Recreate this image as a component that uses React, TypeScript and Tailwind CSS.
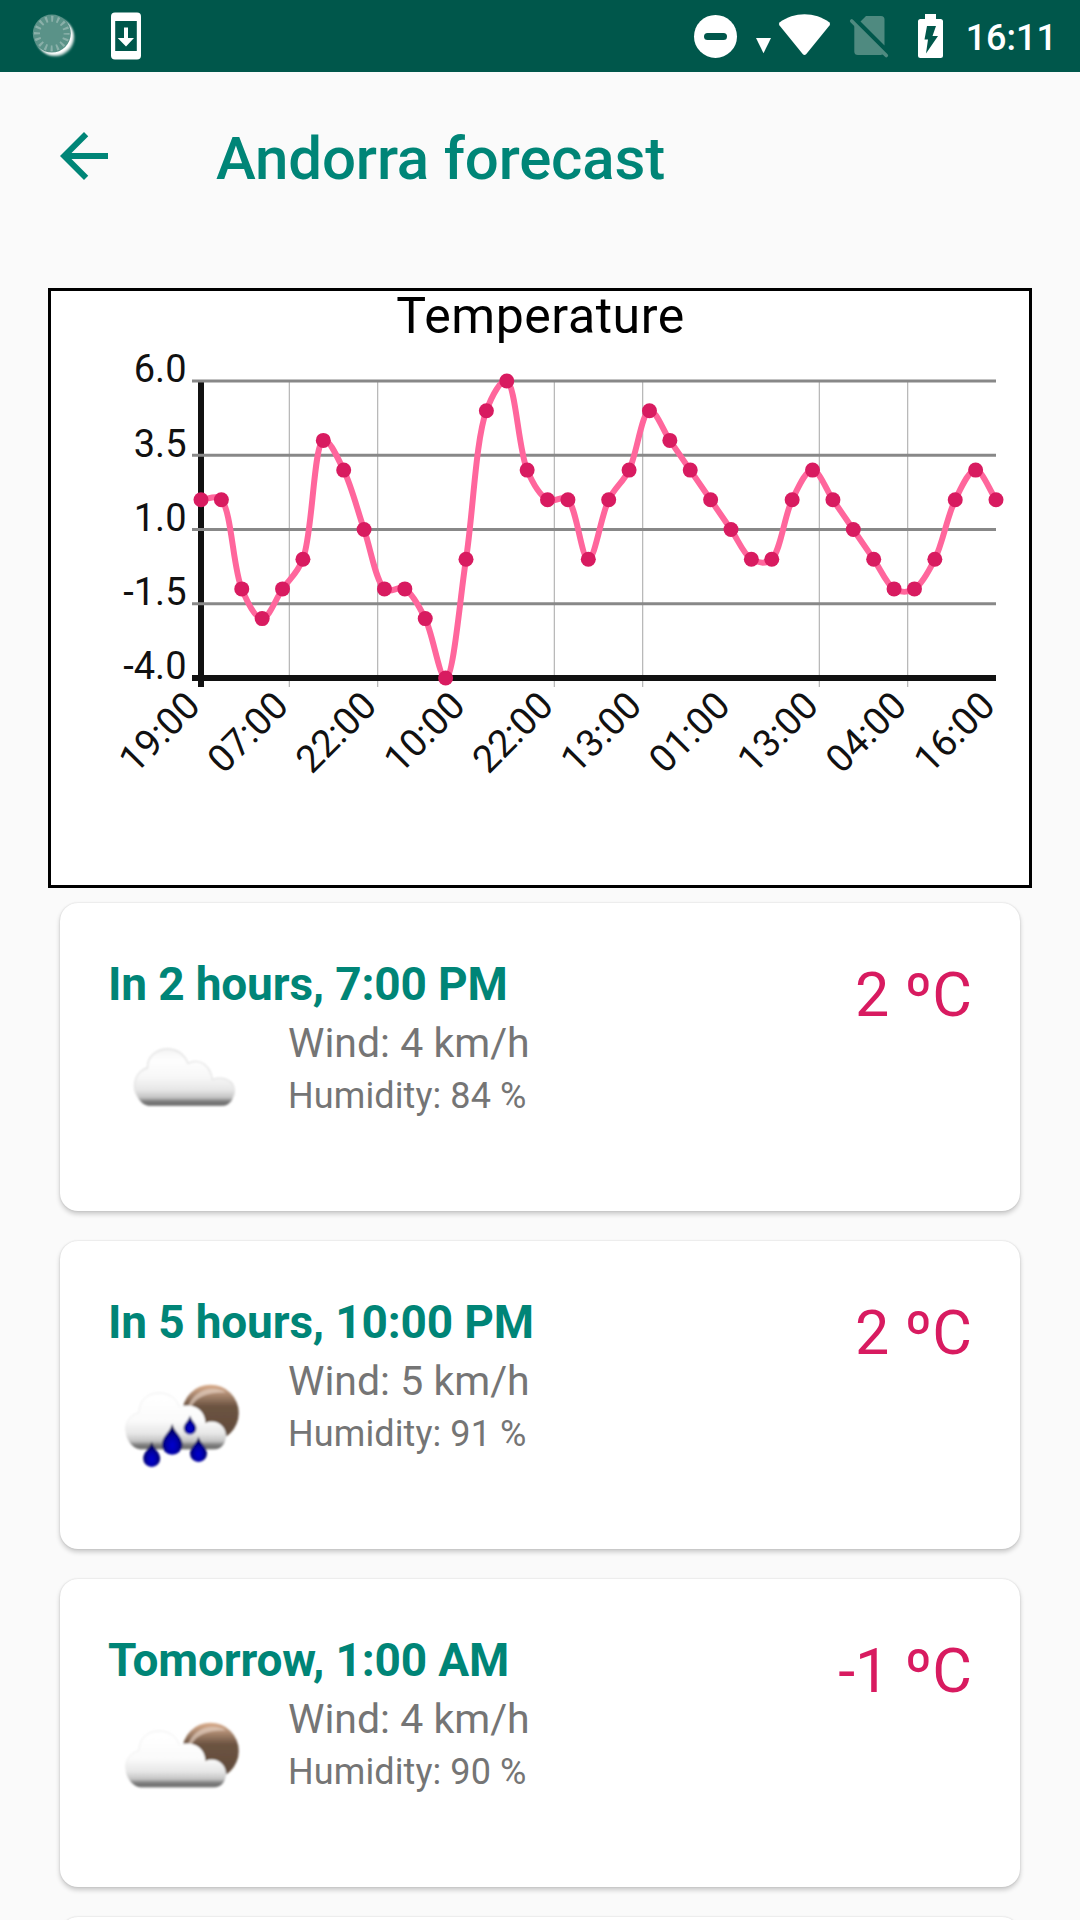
import React from 'react';

const TEMPS = [
  2, 2, -1, -2, -1, 0, 4, 3, 1, -1, -1, -2, -4, 0, 5, 6, 3, 2, 2, 0, 2, 3, 5, 4, 3, 2, 1, 0, 0, 2, 3,
  2, 1, 0, -1, -1, 0, 2, 3, 2,
];
const X_LABELS = ['19:00', '07:00', '22:00', '10:00', '22:00', '13:00', '01:00', '13:00', '04:00', '16:00'];
const X_LINES = [1, 2, 4, 5, 7, 8];
const Y_LABELS = [6, 3.5, 1, -1.5, -4];

// Plot area inside the 978x594 chart canvas.
const LEFT = 150;
const RIGHT = 945;
const TOP = 90;
const BOTTOM = 387;

const px = (i: number) => LEFT + (i * (RIGHT - LEFT)) / (TEMPS.length - 1);
const py = (v: number) => TOP + ((6 - v) * (BOTTOM - TOP)) / 10;

type Pt = [number, number];

// Centripetal Catmull-Rom spline, converted to cubic Bézier segments.
function splinePath(values: number[]): string {
  const n = values.length;
  const pts: Pt[] = values.map((v, i) => [i, v]);
  const all: Pt[] = [
    [-1, 2 * values[0] - values[1]],
    ...pts,
    [n, 2 * values[n - 1] - values[n - 2]],
  ];
  const knot = (a: Pt, b: Pt) => Math.pow((a[0] - b[0]) ** 2 + (a[1] - b[1]) ** 2, 0.25);
  let d = `M${px(0)} ${py(values[0])}`;
  for (let i = 1; i < n; i++) {
    const [p0, p1, p2, p3] = [all[i - 1], all[i], all[i + 1], all[i + 2]];
    const d0 = knot(p0, p1);
    const d1 = knot(p1, p2);
    const d2 = knot(p2, p3);
    const c: Pt[] = [[0, 0], [0, 0]];
    for (const k of [0, 1]) {
      const m1 = d1 * ((p1[k] - p0[k]) / d0 - (p2[k] - p0[k]) / (d0 + d1) + (p2[k] - p1[k]) / d1);
      const m2 = d1 * ((p2[k] - p1[k]) / d1 - (p3[k] - p1[k]) / (d1 + d2) + (p3[k] - p2[k]) / d2);
      c[0][k] = p1[k] + m1 / 3;
      c[1][k] = p2[k] - m2 / 3;
    }
    d += `C${px(c[0][0])} ${py(c[0][1])} ${px(c[1][0])} ${py(c[1][1])} ${px(p2[0])} ${py(p2[1])}`;
  }
  return d;
}

function Chart() {
  return (
    <section className="mx-12 h-[600px] border-[3px] border-black bg-white">
      <svg viewBox="0 0 978 594" className="block h-full w-full overflow-visible" fontFamily="Roboto, sans-serif">
        <text x="489.5" y="42" fontSize="50" letterSpacing="0.55" textAnchor="middle" fill="#000">
          Temperature
        </text>
        {X_LINES.map((i) => (
          <line key={i} x1={LEFT + (i * 795) / 9} x2={LEFT + (i * 795) / 9} y1={TOP} y2="396" stroke="#b4b4b4" strokeWidth="1.2" />
        ))}
        <line x1={LEFT} x2={LEFT} y1={TOP} y2="396" stroke="#111" strokeWidth="6" />
        {Y_LABELS.map((v) => (
          <line
            key={v}
            x1="141"
            x2={RIGHT}
            y1={py(v)}
            y2={py(v)}
            stroke={v === -4 ? '#111' : '#888'}
            strokeWidth={v === -4 ? 6 : 3}
          />
        ))}
        {Y_LABELS.map((v) => (
          <text key={v} x="135.5" y={Math.ceil(py(v)) + 0.5} fontSize="38" textAnchor="end" fill="#111">
            {v.toFixed(1)}
          </text>
        ))}
        {X_LABELS.map((t, i) => {
          const x = LEFT + (i * 795) / 9 + 1;
          return (
            <text key={i} x={x} y="417" fontSize="38" textAnchor="end" fill="#111" transform={`rotate(-45 ${x} 417)`}>
              {t}
            </text>
          );
        })}
        <path d={splinePath(TEMPS)} fill="none" stroke="#ff669c" strokeWidth="6" />
        {TEMPS.map((v, i) => (
          <circle key={i} cx={px(i)} cy={py(v)} r="7.5" fill="#d81b60" />
        ))}
      </svg>
    </section>
  );
}

function StatusBar() {
  return (
    <header className="flex h-18 items-center justify-between bg-[#00574b] pr-[23px] pl-[30px]">
      <div className="flex items-center">
        <svg width="48" height="72" viewBox="30 0 48 72">
          <defs>
            <filter id="soft" x="-20%" y="-20%" width="140%" height="140%">
              <feGaussianBlur stdDeviation="0.9" />
            </filter>
          </defs>
          <circle cx="55.5" cy="37.6" r="19" fill="#7fa9a2" filter="url(#soft)" />
          <circle cx="54.3" cy="36.3" r="18.8" fill="#fff" filter="url(#soft)" />
          <circle cx="51.8" cy="33.6" r="19" fill="#5a9288" />
          <circle cx="51.8" cy="33.6" r="14.8" fill="none" stroke="#8ab0a9" strokeWidth="6" strokeDasharray="2.1 3.712" strokeDashoffset="1.05" />
        </svg>
        <svg width="30" height="72" viewBox="111 0 30 72" className="ml-[33px]">
          <rect x="111" y="12.5" width="30" height="47" rx="4" fill="#fff" />
          <rect x="115.2" y="21" width="21.6" height="30" fill="#00574b" />
          <path d="M124 27.500H128V38H134L126 46.500L117.700 38H124Z" fill="#fff" />
        </svg>
      </div>
      <div className="flex items-center">
        <svg width="255" height="72" viewBox="690 0 255 72">
          <circle cx="715.5" cy="36.400" r="21.500" fill="#fff" />
          <rect x="704" y="33" width="23" height="7" rx="3.500" fill="#00574b" />
          <path d="M756 38H771L763.500 53.200Z" fill="#fff" />
          <path d="M779.500 22.500C794 11.500 815 11.500 829.500 22.500Q830.700 24 829.500 25.600L806.300 54Q804.500 56 802.700 54L779.500 25.600Q778.300 24 779.500 22.500Z" fill="#fff" />
          <path d="M866 16H881Q884.500 16 884.500 19.500V45.500L860.500 21.500ZM854.300 23L884.300 53Q883 55 880.500 55H858Q854.300 55 854.300 51.500Z" fill="#4f8a80" />
          <path d="M851.700 21L886.300 55.600" stroke="#4f8a80" strokeWidth="3.600" strokeLinecap="round" />
          <path d="M925 14H936V19H940.500Q943 19 943 21.500V55.500Q943 58 940.500 58H920.500Q918 58 918 55.500V21.500Q918 19 920.500 19H925Z" fill="#fff" />
          <path d="M927 26H936L932.500 36H938L926 53.500L928 39.500H924.500Z" fill="#00574b" />
        </svg>
        <span className="mt-[3px] ml-[21px] text-[36px] leading-none font-medium text-white">16:11</span>
      </div>
    </header>
  );
}

type Sky = 'cloud' | 'night' | 'rain';

const DROPS: [number, number, number][] = [
  [43.7, 75.5, 1],
  [64.2, 56.5, 1.22],
  [82, 50.8, 0.75],
  [90.5, 70.5, 1],
];

function WeatherIcon({ kind }: { kind: Sky }) {
  const grad = `cloud-${kind}`;
  const plain = kind === 'cloud';
  return (
    <svg width="150" height="150" viewBox="0 0 150 150" className="shrink-0">
      <defs>
        <linearGradient id={grad} x1="0" y1="0" x2="0" y2="1">
          <stop offset="0" stopColor={plain ? '#f4f4f4' : '#ffffff'} />
          <stop offset="0.2" stopColor="#fefefe" />
          <stop offset="0.5" stopColor={plain ? '#f7f7f7' : '#fafafa'} />
          <stop offset="0.72" stopColor="#e6e6e6" />
          <stop offset="0.85" stopColor="#c4c4c4" />
          <stop offset="0.91" stopColor="#868686" />
          <stop offset="0.96" stopColor="#6c6c6c" />
          <stop offset="1" stopColor="#8a8a8a" />
        </linearGradient>
        <linearGradient id={`${grad}-edge`} x1="0" y1="0" x2="0" y2="1">
          <stop offset="0" stopColor="#e2e2e2" />
          <stop offset="0.75" stopColor="#e2e2e2" />
          <stop offset="0.9" stopColor="#e2e2e2" stopOpacity="0" />
        </linearGradient>
        <linearGradient id={`${grad}-moon`} x1="0" y1="0" x2="0" y2="1">
          <stop offset="0" stopColor="#dcae8c" />
          <stop offset="0.18" stopColor="#a9876f" />
          <stop offset="0.38" stopColor="#6c5341" />
          <stop offset="1" stopColor="#5f4a3a" />
        </linearGradient>
        <radialGradient id={`${grad}-drop`} cx="0.5" cy="0.7" r="0.6">
          <stop offset="0" stopColor="#0000d0" />
          <stop offset="0.45" stopColor="#0000a8" />
          <stop offset="1" stopColor="#000040" />
        </radialGradient>
        <filter id={`${grad}-blur`} x="-10%" y="-10%" width="120%" height="120%">
          <feGaussianBlur stdDeviation="0.8" />
        </filter>
      </defs>
      {plain ? (
        <g filter={`url(#${grad}-blur)`}>
          <path
            d="M42 98C34 98 26.500 88 26.500 78C26.500 68 33 61.500 39.500 60C39 48 49 41 59.500 41C69 41 76 46 80 55.500C91 49.500 102 57 104.500 71.500C116 67.500 126.500 73 126.500 83C126.500 90 122 98 114 98Z"
            fill={`url(#${grad})`}
            stroke={`url(#${grad}-edge)`}
            strokeWidth="1.3"
          />
        </g>
      ) : (
        <g filter={`url(#${grad}-blur)`} transform="translate(0 14.500)">
          <circle cx="102.5" cy="52.500" r="28.300" fill={`url(#${grad}-moon)`} />
          <path d="M80 46Q86 31 101 28.500Q112 27.500 118 32Q103 31.500 94 36Q86 40 83 47Z" fill="#e6d3c5" opacity="0.65" />
          <path
            d="M33.500 89C25 89 17.500 79 17.500 69.500C17.500 60 24 53.500 31 52C31 39.500 40 32.500 51 32.500C61 32.500 68 37.500 71.500 46.500C85 41.500 97 49 97.500 62.500C107 58 118 65 118 75C118 83 113 89 106 89Z"
            fill={`url(#${grad})`}
          />
          <path
            d="M17.500 69.500C17.500 60 24 53.500 31 52C31 39.500 40 32.500 51 32.500C61 32.500 68 37.500 71.500 46.500"
            fill="none"
            stroke="#eaeaea"
            strokeWidth="0.8"
          />
          {kind === 'rain' &&
            DROPS.map(([x, y, s]) => (
              <path
                key={x}
                transform={`translate(${x} ${y}) scale(${s})`}
                d="M0 5.500C1.500 12 8.500 16 8.500 22.500A8.500 8.500 0 0 1 -8.500 22.500C-8.500 16 -1.500 12 0 5.500Z"
                fill={`url(#${grad}-drop)`}
              />
            ))}
        </g>
      )}
    </svg>
  );
}

interface Forecast {
  when: string;
  wind: string;
  humidity: string;
  temp: string;
  sky: Sky;
}

const FORECASTS: Forecast[] = [
  { when: 'In 2 hours, 7:00 PM', wind: 'Wind: 4 km/h', humidity: 'Humidity: 84 %', temp: '2 ºC', sky: 'cloud' },
  { when: 'In 5 hours, 10:00 PM', wind: 'Wind: 5 km/h', humidity: 'Humidity: 91 %', temp: '2 ºC', sky: 'rain' },
  { when: 'Tomorrow, 1:00 AM', wind: 'Wind: 4 km/h', humidity: 'Humidity: 90 %', temp: '-1 ºC', sky: 'night' },
];

const CARD =
  'h-[308px] shrink-0 rounded-[18px] bg-white shadow-[0_3px_5px_rgba(0,0,0,0.2),0_0_2px_rgba(0,0,0,0.14)]';

function Card({ when, wind, humidity, temp, sky }: Forecast) {
  return (
    <article className={`${CARD} flex items-start justify-between p-12`}>
      <div className="flex flex-col">
        <h2 className="h-[57px] text-[46px] leading-[66px] font-bold tracking-[-0.16px] whitespace-nowrap text-[#008577]">
          {when}
        </h2>
        <div className="flex gap-[30px]">
          <WeatherIcon kind={sky} />
          <div className="flex flex-col pt-[7px] text-[#757575]">
            <p className="text-[41px] leading-[56px]">{wind}</p>
            <p className="pt-px text-[36px] leading-[48px] tracking-[0.1px]">{humidity}</p>
          </div>
        </div>
      </div>
      <div className="text-[61px] leading-[88px] text-[#d81b60]">{temp}</div>
    </article>
  );
}

export default function App() {
  return (
    <div className="flex h-[1920px] w-[1080px] flex-col overflow-hidden bg-[#fafafa] font-[Roboto,sans-serif]">
      <StatusBar />
      <div className="flex h-[168px] shrink-0 items-center pl-[60px]">
        <svg width="48" height="48" viewBox="4 4 16 16" fill="#008577">
          <path d="M20 11H7.830l5.590-5.590L12 4l-8 8 8 8 1.410-1.410L7.830 13H20v-2z" />
        </svg>
        <h1 className="mt-1.5 ml-27 text-[60px] leading-[70px] font-medium tracking-[-0.17px] text-[#008577]">
          Andorra forecast
        </h1>
      </div>
      <main className="flex flex-col pt-12">
        <Chart />
        <div className="mx-15 mt-[15px] flex flex-col gap-[30px]">
          {FORECASTS.map((f) => (
            <Card key={f.when} {...f} />
          ))}
          <article className={CARD} />
        </div>
      </main>
    </div>
  );
}
